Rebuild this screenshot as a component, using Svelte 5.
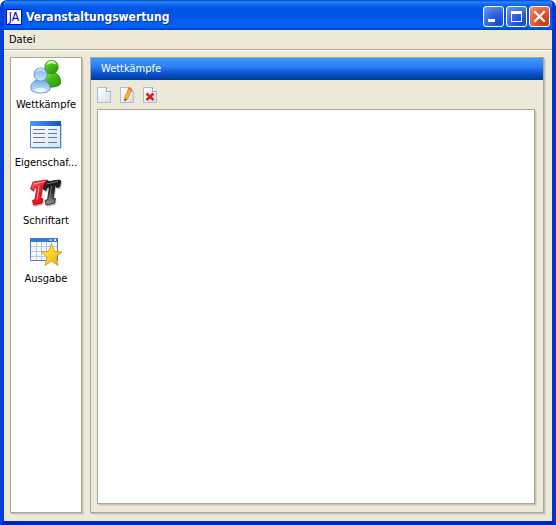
<script>
  const pages = [
    { id: 'contests', label: 'Wettkämpfe' },
    { id: 'properties', label: 'Eigenschaf...' },
    { id: 'font', label: 'Schriftart' },
    { id: 'output', label: 'Ausgabe' }
  ];
  let active = $state('contests');
</script>

<div class="window">
  <header class="titlebar">
    <span class="logo" aria-hidden="true">JA</span>
    <h1>Veranstaltungswertung</h1>
    <div class="controls">
      <button class="ctl" aria-label="Minimieren">
        <svg viewBox="0 0 19 19"><path d="M4 12h7v3H4z" fill="#fff" /></svg>
      </button>
      <button class="ctl" aria-label="Maximieren">
        <svg viewBox="0 0 19 19"><path d="M4 4h11v11H4zM5 7v7h9V7z" fill="#fff" fill-rule="evenodd" /></svg>
      </button>
      <button class="ctl close" aria-label="Schließen">
        <svg viewBox="0 0 19 19"><path d="M5 5l9 9M14 5l-9 9" stroke="#fff" stroke-width="2.2" stroke-linecap="square" /></svg>
      </button>
    </div>
  </header>

  <nav class="menubar"><button>Datei</button></nav>

  <div class="content">
    <nav class="sidebar sunken">
      {#each pages as page (page.id)}
        <button onclick={() => (active = page.id)} aria-pressed={active === page.id}>
          {#if page.id === 'contests'}
            <svg viewBox="0 0 32 34">
              <defs>
                <linearGradient id="green" x1="0" y1="0" x2="1" y2="1">
                  <stop offset="0" stop-color="#a2e36c" /><stop offset=".45" stop-color="#43b914" /><stop offset="1" stop-color="#259000" />
                </linearGradient>
                <linearGradient id="blue" x1="0" y1="0" x2="0" y2="1">
                  <stop offset="0" stop-color="#72aee5" /><stop offset=".5" stop-color="#a4cbf2" /><stop offset="1" stop-color="#c9eaff" />
                </linearGradient>
              </defs>
              <path d="M12 25v-5c0-4 3-6 6-7h7c3 1 5.500 4 5.500 8v3c-3 4-14 4-18.500 1z" fill="url(#green)" stroke="#268c0c" stroke-width=".8" />
              <circle cx="21.500" cy="7" r="6.700" fill="url(#green)" stroke="#268c0c" stroke-width=".8" />
              <path d="M16.500 5c1-6 9-6 10 0-3-2-7-2-10 0z" fill="#e2fac9" opacity=".8" />
              <path d="M1 30v-3c0-4 3-6 6-7h7c3 1 6 4 6 8v2c-3 4-16 4-19 0z" fill="url(#blue)" stroke="#5588c5" stroke-width=".8" />
              <circle cx="10.500" cy="14.500" r="6.600" fill="url(#blue)" stroke="#5588c5" stroke-width=".8" />
              <path d="M5.500 12.500c1-6 9-6 10 0-3-2-7-2-10 0z" fill="#d5ebff" opacity=".75" />
              <path d="M4 30c4 3 9 3 13 0-4-3-9-3-13 0z" fill="#e2f7ff" />
            </svg>
          {:else if page.id === 'properties'}
            <svg viewBox="0 0 32 34">
              <defs>
                <linearGradient id="bar" x1="0" x2="1"><stop offset="0" stop-color="#5297f1" /><stop offset="1" stop-color="#1455c5" /></linearGradient>
                <linearGradient id="sheet" x1="0" y1="0" x2="1" y2="1"><stop offset="0" stop-color="#fff" /><stop offset="1" stop-color="#d2e5fa" /></linearGradient>
              </defs>
              <path d="M2 30.500h29.500V6" fill="none" stroke="#c8d0dc" />
              <path d="M.5 3.500h30v26H.5z" fill="url(#sheet)" stroke="#5288cf" />
              <path d="M0 3h31v5H0z" fill="url(#bar)" />
              <path d="M3 11.500h12M3 15.500h12M3 19.500h12M3 24.500h12M18 11.500h9M18 15.500h9M18 19.500h9M18 24.500h9" stroke="#737983" />
            </svg>
          {:else if page.id === 'font'}
            <svg viewBox="0 0 32 34">
              <defs>
                <linearGradient id="red" x1="0" y1="0" x2="1" y2="1"><stop offset="0" stop-color="#ff7474" /><stop offset=".45" stop-color="#fb1c28" /><stop offset="1" stop-color="#d90009" /></linearGradient>
                <linearGradient id="black" x1="0" y1="0" x2="0" y2="1"><stop offset="0" stop-color="#111" /><stop offset=".45" stop-color="#2b2b2b" /><stop offset="1" stop-color="#999" /></linearGradient>
                <path id="tee" d="M3 6l14-2 1.500 1-1.500 6-3 .5v-2l-1.500.5-2 13 2.500-.5-1 4.500-8.500 2-1-4.500 2.500-1L7 11l-2.500.5-1 3L.5 13z" />
              </defs>
              <use href="#tee" x="1" y="2" fill="#bbb" />
              <use href="#tee" y="0" fill="url(#red)" stroke="#a9000c" stroke-width=".8" />
              <path d="M3.500 8l12-2.500M9 10L7 24" stroke="#ffa0a0" />
              <use href="#tee" x="13.500" y="2" fill="#bbb" />
              <use href="#tee" x="12.500" y="0" fill="url(#black)" stroke="#171717" stroke-width=".8" />
              <path d="M16 8l12-2.500M21.500 10l-2 14" stroke="#777" />
            </svg>
          {:else}
            <svg viewBox="0 0 32 34">
              <defs>
                <linearGradient id="gold" x1="0" y1="0" x2="1" y2="1"><stop offset="0" stop-color="#fff37b" /><stop offset=".5" stop-color="#ffd02c" /><stop offset="1" stop-color="#ee9c0b" /></linearGradient>
              </defs>
              <path d="M.5 4.500h27v22H.5z" fill="#f6faff" stroke="#4a80c5" />
              <path d="M0 4h28v4H0z" fill="#397ac9" />
              <path d="M19 6h3M24 5l2 2m0-2l-2 2" stroke="#d7e9ff" />
              <path d="M1 12.500h26M1 17.500h26M1 22.500h26M6.500 8v18M11.500 8v18M16.500 8v18M21.500 8v18" stroke="#b4cae6" />
              <path d="M21.500 10l3 7.500 7.500.5-6 5 2 8.500-6.500-4.500-6.500 4.500 2-8.500-6-5 7.500-.5z" fill="url(#gold)" stroke="#dda01d" stroke-linejoin="round" />
            </svg>
          {/if}
          <span>{page.label}</span>
        </button>
      {/each}
    </nav>

    <main class="panel sunken">
      <h2>Wettkämpfe</h2>
      <div class="toolbar">
        {#each ['Neu', 'Bearbeiten', 'Löschen'] as action, i}
          <button aria-label={action}>
            <svg viewBox="0 0 17 17">
              <defs><linearGradient id="paper{i}" x1="0" y1="0" x2="1" y2="1"><stop offset="0" stop-color="#fff" /><stop offset="1" stop-color="#d4dcec" /></linearGradient></defs>
              <path d="M1.500 1.500h9l4 4v11h-13z" fill="url(#paper{i})" stroke="#b3bccf" />
              <path d="M10.500 1.500v4h4" fill="#fff" stroke="#98a8c5" />
              {#if i === 1}
                <path d="M13 8l4 3-4 3z" fill="#d1d1ca" />
                <path d="M10 1.500l3 1.500-4.500 10-3 2 .5-4z" fill="#ffb629" stroke="#d88012" stroke-width=".8" />
                <path d="M10 1.500l3 1.500-1 2-3-1.500z" fill="#ee7261" />
                <path d="M5.500 15l.3-2.500 1.700 1z" fill="#333" />
              {:else if i === 2}
                <path d="M4.500 7.500l7 6.500M11.500 7.500l-7 6.500" stroke="#e21b12" stroke-width="2.500" />
              {/if}
            </svg>
          </button>
        {/each}
      </div>
      <div class="list sunken" role="listbox" aria-label="Wettkämpfe" tabindex="0"></div>
    </main>
  </div>
</div>

<style>
  :global(body) { background: #fff; }
  .window {
    box-sizing: border-box;
    min-height: 100vh;
    display: flex;
    flex-direction: column;
    border: solid;
    border-width: 0 4px 4px;
    border-color: #0046e3 #0036cf #0024b8 #0040df;
    border-radius: 7px 7px 0 0;
    background: #ece9d8;
    font: 11px/14px "DejaVu Sans Condensed", "DejaVu Sans", sans-serif;
    color: #000;
    overflow: hidden;
  }
  button { font: inherit; color: inherit; border: 0; padding: 0; background: none; }
  svg { display: block; }
  .titlebar {
    height: 30px;
    margin: 0 -4px;
    padding: 3px 6px 0;
    box-sizing: border-box;
    display: flex;
    align-items: center;
    background: linear-gradient(#0048c6 0, #2c86fa 2px, #0c64ee 5px, #0054e3 9px, #0055e8 17px, #0062f8 24px, #0060f5 27px, #003fc5 30px);
  }
  .logo {
    box-sizing: border-box;
    width: 16px;
    height: 16px;
    border: 1px solid #0000f0;
    background: #fff;
    color: #0000b8;
    font-size: 12px;
    text-align: center;
  }
  h1 {
    margin: 0 auto 0 4px;
    font: bold 12px/20px "DejaVu Sans Condensed", "DejaVu Sans", sans-serif;
    color: #fff;
    text-shadow: 1px 1px #0c2c8c;
  }
  .controls { display: flex; gap: 2px; }
  .ctl {
    width: 21px;
    height: 21px;
    border: 1px solid #fff;
    border-radius: 3px;
    background: radial-gradient(circle at 80% 85%, #134ad5, #2d62e2 45%, #719cf2 100%);
  }
  .close { background: radial-gradient(circle at 80% 85%, #c63a10, #df5634 50%, #ef977e 100%); }
  .menubar {
    height: 19px;
    padding-left: 5px;
    display: flex;
    align-items: center;
    border-bottom: 1px solid #aca899;
    box-shadow: 0 1px #fff;
  }
  .content { flex: 1; display: flex; gap: 8px; padding: 7px 8px 8px 6px; }
  .sunken { border: 1px solid #aca899; box-shadow: 1px 1px #c5c2b0, 2px 2px #dbd8c6; }
  .sidebar {
    width: 70px;
    display: flex;
    flex-direction: column;
    background: #fff;
  }
  .sidebar button {
    height: 58px;
    display: flex;
    flex-direction: column;
    align-items: center;
    white-space: nowrap;
  }
  .sidebar svg { width: 32px; height: 34px; margin: 2px 0 4px; }
  .panel { flex: 1; display: flex; flex-direction: column; }
  h2 {
    margin: 0;
    padding: 0 10px;
    font: inherit;
    line-height: 22px;
    color: #fff;
    background: linear-gradient(#4098ff, #2880f4 40%, #0d5ad3 65%, #003a9c);
  }
  .toolbar { display: flex; gap: 6px; padding: 6px 5px; }
  .toolbar svg { width: 17px; height: 17px; }
  .list { flex: 1; margin: 0 8px 8px 6px; background: #fff; }
</style>
